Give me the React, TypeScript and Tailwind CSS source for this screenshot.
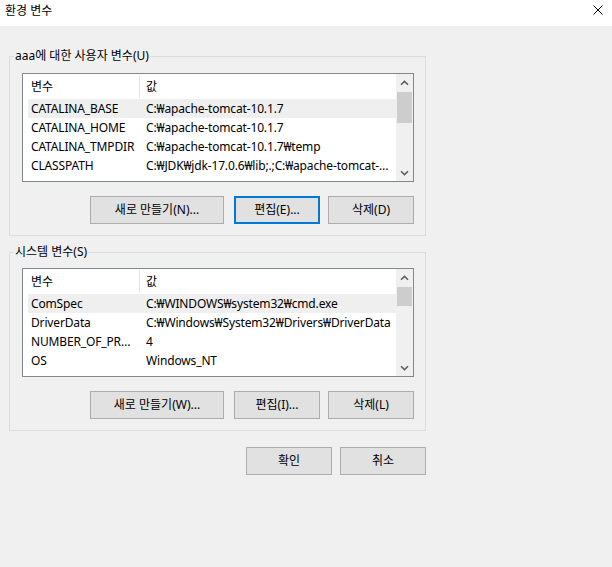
import React from "react";

type Row = { name: string; value: string };

const userVars: Row[] = [
  { name: "CATALINA_BASE", value: "C:₩apache-tomcat-10.1.7" },
  { name: "CATALINA_HOME", value: "C:₩apache-tomcat-10.1.7" },
  { name: "CATALINA_TMPDIR", value: "C:₩apache-tomcat-10.1.7₩temp" },
  { name: "CLASSPATH", value: "C:₩JDK₩jdk-17.0.6₩lib;.;C:₩apache-tomcat-10.1.7₩lib₩servlet-api.jar" },
];

const sysVars: Row[] = [
  { name: "ComSpec", value: "C:₩WINDOWS₩system32₩cmd.exe" },
  { name: "DriverData", value: "C:₩Windows₩System32₩Drivers₩DriverData" },
  { name: "NUMBER_OF_PROCESSORS", value: "4" },
  { name: "OS", value: "Windows_NT" },
];

function Chevron({ down }: { down?: boolean }) {
  return (
    <svg width="9" height="6" viewBox="0 0 9 6" className="block">
      <path
        d={down ? "M1 1.2 L4.5 4.6 L8 1.2" : "M1 4.8 L4.5 1.4 L8 4.8"}
        fill="none"
        stroke="#606060"
        strokeWidth="1.6"
      />
    </svg>
  );
}

function ListView({ rows, thumbH }: { rows: Row[]; thumbH: string }) {
  return (
    <div className="w-[392px] h-[109px] border border-[#828790] bg-white flex">
      <div className="flex-1 min-w-0 flex flex-col overflow-hidden pl-[5px]">
        <div className="h-[25px] flex shrink-0">
          <div className="w-[111px] shrink-0 pl-[3px] flex items-center">변수</div>
          <div className="flex-1 flex items-center border-l border-[#e5e5e5] pl-[6px] my-[1px]">값</div>
        </div>
        {rows.map((r, i) => (
          <div
            key={r.name}
            className={
              i === 0
                ? "h-[19px] shrink-0 flex items-center bg-[#efefef] tracking-[-0.15px]"
                : "h-[19px] shrink-0 flex items-center tracking-[-0.15px]"
            }
          >
            <div className="w-[111px] shrink-0 pl-[3px] pr-[1px] truncate">{r.name}</div>
            <div className="flex-1 min-w-0 pl-[7px] pr-[2px] truncate">{r.value}</div>
          </div>
        ))}
      </div>
      <div className="w-[17px] shrink-0 bg-[#f0f0f0] flex flex-col">
        <div className="h-[17px] flex items-center justify-center">
          <Chevron />
        </div>
        <div className="flex-1">
          <div className={"mt-[1px] ml-[1px] w-[15px] bg-[#cdcdcd] " + thumbH}></div>
        </div>
        <div className="h-[17px] flex items-center justify-center">
          <Chevron down />
        </div>
      </div>
    </div>
  );
}

function Btn({ label, w, focused }: { label: string; w: string; focused?: boolean }) {
  return (
    <div
      className={
        "h-[28px] flex items-center justify-center bg-[#e1e1e1] " +
        w +
        (focused ? " border-2 border-[#0078d7]" : " border border-[#adadad]")
      }
    >
      {label}
    </div>
  );
}

function Group({
  legend,
  rows,
  thumbH,
  pt,
  newLabel,
  editLabel,
  delLabel,
  focusEdit,
}: {
  legend: string;
  rows: Row[];
  thumbH: string;
  pt: string;
  newLabel: string;
  editLabel: string;
  delLabel: string;
  focusEdit?: boolean;
}) {
  return (
    <div className={"relative ml-[9px] w-[417px] border border-[#dcdcdc] pl-[12px] pb-[11px] " + pt}>
      <div className="absolute left-[4px] top-[-9px] px-[1px] bg-[#f0f0f0] leading-[16px]">{legend}</div>
      <ListView rows={rows} thumbH={thumbH} />
      <div className="w-[392px] mt-[14px] flex justify-end">
        <Btn label={newLabel} w="w-[134px]" />
        <div className="ml-[10px]">
          <Btn label={editLabel} w="w-[86px]" focused={focusEdit} />
        </div>
        <div className="ml-[8px]">
          <Btn label={delLabel} w="w-[86px]" />
        </div>
      </div>
    </div>
  );
}

export default function App() {
  return (
    <div className="w-[612px] h-[567px] bg-[#f0f0f0] flex flex-col text-[12px] text-black font-['Noto_Sans','Noto_Sans_CJK_KR',sans-serif] leading-[16px] overflow-hidden">
      <div className="h-[26px] bg-white flex items-start justify-between pl-[5px] pr-[9px] shrink-0">
        <div className="pt-[3px]">환경 변수</div>
        <svg width="10" height="10" viewBox="0 0 10 10" className="mt-[5px]">
          <path d="M0.5 0.5 L9.5 9.5 M9.5 0.5 L0.5 9.5" stroke="#000" strokeWidth="1" fill="none" />
        </svg>
      </div>
      <div className="pt-[30px] flex flex-col">
        <Group
          legend="aaa에 대한 사용자 변수(U)"
          rows={userVars}
          thumbH="h-[31px]"
          pt="pt-[16px]"
          newLabel="새로 만들기(N)..."
          editLabel="편집(E)..."
          delLabel="삭제(D)"
          focusEdit
        />
        <div className="h-[16px]"></div>
        <Group
          legend="시스템 변수(S)"
          rows={sysVars}
          thumbH="h-[19px]"
          pt="pt-[15px]"
          newLabel="새로 만들기(W)..."
          editLabel="편집(I)..."
          delLabel="삭제(L)"
        />
        <div className="ml-[9px] w-[417px] mt-[16px] flex justify-end">
          <Btn label="확인" w="w-[86px]" />
          <div className="ml-[8px]">
            <Btn label="취소" w="w-[86px]" />
          </div>
        </div>
      </div>
    </div>
  );
}
